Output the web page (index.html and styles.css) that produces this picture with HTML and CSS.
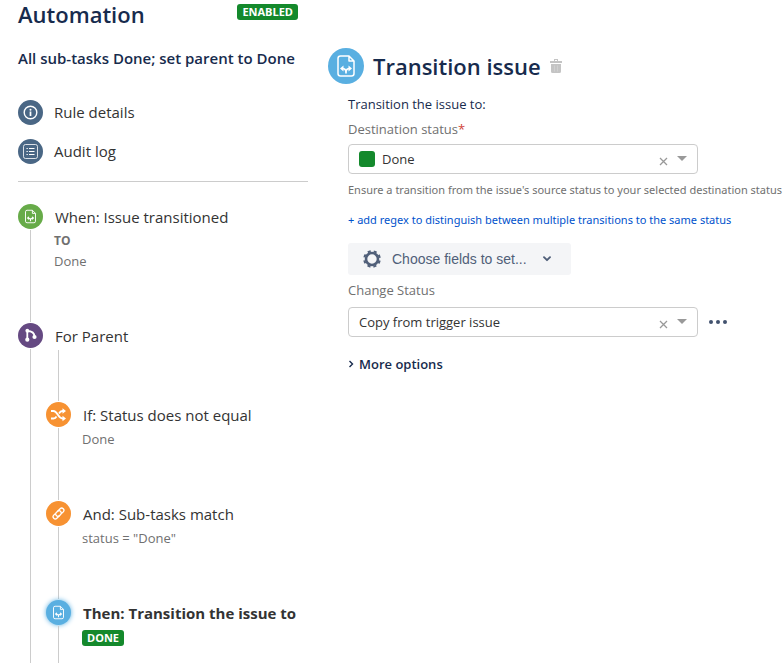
FILE: index.html
```html
<!DOCTYPE html>
<html lang="en">
<head>
<meta charset="utf-8">
<title>Automation</title>
<link rel="stylesheet" href="styles.css">
</head>
<body>
<svg class="sprite" aria-hidden="true">
  <symbol id="doc" viewBox="0 0 24 24">
    <path d="M15 2H6.500A2.500 2.500 0 0 0 4 4.500v15A2.500 2.500 0 0 0 6.500 22h11a2.500 2.500 0 0 0 2.500-2.500V7zM15 2v5h5" fill="none" stroke="currentColor" stroke-width="1.500" stroke-linejoin="round"/>
    <path d="M12 19.500V18c0-2-1.200-3.500-4-3.500M12 18c0-2 1.200-3.500 4-3.500" fill="none" stroke="currentColor" stroke-width="1.700"/>
    <path d="M9.500 11.500v6L6 14.500zM14.500 11.500v6l3.500-3z" fill="currentColor"/>
  </symbol>
  <symbol id="caret" viewBox="0 0 10 5"><path d="M0 0h10L5 5z" fill="currentColor"/></symbol>
  <symbol id="cross" viewBox="0 0 9 9"><path d="M1 1l7 7M8 1L1 8" stroke="currentColor" stroke-width="1.300" fill="none"/></symbol>
</svg>
<div class="page">
  <aside class="sidebar">
    <header class="sidebar-head">
      <h1>Automation</h1>
      <span class="badge">ENABLED</span>
    </header>
    <h2 class="rule-name">All sub-tasks Done; set parent to Done</h2>
    <nav class="links">
      <a href="#details"><span class="dot slate"><svg viewBox="0 0 25 25"><circle cx="12.500" cy="12.500" r="6.300" fill="none" stroke="currentColor" stroke-width="1.400"/><circle cx="12.500" cy="9.700" r="1" fill="currentColor"/><path d="M12.500 11.500v4.500" stroke="currentColor" stroke-width="1.700"/></svg></span>Rule details</a>
      <a href="#audit"><span class="dot slate"><svg viewBox="0 0 25 25"><rect x="5.500" y="5.500" width="14" height="14" rx="2" fill="none" stroke="currentColor" opacity=".8"/><path d="M8.500 9.500h1.300M8.500 12.500h1.300M8.500 15.500h1.300M11 9.500h5.500M11 12.500h5.500M11 15.500h5.500" stroke="currentColor"/></svg></span>Audit log</a>
    </nav>
    <ol class="steps">
      <li class="step">
        <div class="rail"><span class="dot green"><svg class="doc-icon"><use href="#doc"/></svg></span></div>
        <div class="step-body">
          <a class="step-title" href="#when">When: Issue transitioned</a>
          <p class="detail strong">TO</p>
          <p class="detail">Done</p>
        </div>
      </li>
      <li class="step branch">
        <div class="rail"><span class="dot purple"><svg viewBox="0 0 25 25"><path d="M9.300 8v9M9.300 8c5 0 7.200 2 7.200 6" fill="none" stroke="currentColor" stroke-width="1.800"/><circle cx="9.300" cy="7.700" r="1.900" fill="currentColor"/><circle cx="9.300" cy="16.700" r="2.100" fill="currentColor"/><circle cx="16.500" cy="14" r="2.100" fill="currentColor"/></svg></span></div>
        <div class="step-body">
          <a class="step-title" href="#parent">For Parent</a>
          <ol class="steps nested">
            <li class="step">
              <div class="rail"><span class="dot orange"><svg viewBox="0 0 25 25"><path d="M5 9h2.500c4 0 4.500 7.500 9 7.500h1M5 16.500h2.500c1.500 0 2.400-.8 3-2M13 11.500c.8-1.500 1.700-2.500 3.500-2.500h1" fill="none" stroke="currentColor" stroke-width="1.800"/><path d="M16.500 6.200v5.600L20 9zM16.500 13.700v5.600l3.500-2.800z" fill="currentColor"/></svg></span></div>
              <div class="step-body">
                <a class="step-title" href="#if">If: Status does not equal</a>
                <p class="detail">Done</p>
              </div>
            </li>
            <li class="step">
              <div class="rail"><span class="dot orange"><svg viewBox="0 0 25 25"><g transform="rotate(-45 12.500 12.500)" fill="none" stroke="currentColor" stroke-width="1.300" stroke-linecap="round"><path d="M11.500 14.700a2.200 2.200 0 0 1 .5-4.400h5a2.200 2.200 0 0 1 0 4.400h-1.500"/><path d="M13.500 10.300a2.200 2.200 0 0 1-.5 4.400H8a2.200 2.200 0 0 1 0-4.400h1.500"/></g></svg></span></div>
              <div class="step-body">
                <a class="step-title" href="#and">And: Sub-tasks match</a>
                <p class="detail">status = "Done"</p>
              </div>
            </li>
            <li class="step last">
              <div class="rail"><span class="dot blue glow"><svg class="doc-icon"><use href="#doc"/></svg></span></div>
              <div class="step-body">
                <a class="step-title current" href="#then">Then: Transition the issue to</a>
                <p class="detail"><span class="badge">DONE</span></p>
              </div>
            </li>
          </ol>
        </div>
      </li>
    </ol>
  </aside>

  <main class="content">
    <header class="content-head">
      <span class="dot big blue"><svg class="doc-icon"><use href="#doc"/></svg></span>
      <h2>Transition issue</h2>
      <button class="icon-button trash" type="button" aria-label="Delete"><svg viewBox="0 0 12 14"><path d="M0 2h12v2H0zM4 0h4v2H7V1H5v1H4zM1 5h10v7.500a1.500 1.500 0 0 1-1.500 1.500h-7A1.500 1.500 0 0 1 1 12.500z" fill="#c4c4c4"/><path d="M4.500 6.500v6M7.500 6.500v6" stroke="#d0d0d0"/></svg></button>
    </header>
    <form class="form">
      <p class="lead">Transition the issue to:</p>
      <label for="status">Destination status<span class="required">*</span></label>
      <div class="row">
        <div class="picker with-swatch">
          <select id="status"><option>Done</option></select>
          <span class="swatch"></span>
          <button class="icon-button clear" type="button" aria-label="Clear"><svg><use href="#cross"/></svg></button>
          <svg class="caret"><use href="#caret"/></svg>
        </div>
      </div>
      <p class="hint">Ensure a transition from the issue's source status to your selected destination status</p>
      <a class="regex" href="#regex">+ add regex to distinguish between multiple transitions to the same status</a>
      <button class="choose" type="button">
        <svg class="gear" viewBox="0 0 18 18"><circle cx="9" cy="9" r="6" fill="none" stroke="currentColor" stroke-width="2.600"/><circle cx="9" cy="9" r="7.800" fill="none" stroke="currentColor" stroke-width="2" stroke-dasharray="3.100 3.026" stroke-dashoffset="-1.500"/></svg>
        Choose fields to set...
        <svg class="chevron" viewBox="0 0 8 6"><path d="M1 1.200l3 3 3-3" fill="none" stroke="currentColor" stroke-width="1.900" stroke-linecap="round" stroke-linejoin="round"/></svg>
      </button>
      <label for="change">Change Status</label>
      <div class="row">
        <div class="picker">
          <select id="change"><option>Copy from trigger issue</option></select>
          <button class="icon-button clear" type="button" aria-label="Clear"><svg><use href="#cross"/></svg></button>
          <svg class="caret"><use href="#caret"/></svg>
        </div>
        <button class="icon-button dots" type="button" aria-label="More actions"><svg viewBox="0 0 18 4"><g fill="currentColor"><circle cx="2" cy="2" r="2"/><circle cx="9" cy="2" r="2"/><circle cx="16" cy="2" r="2"/></g></svg></button>
      </div>
      <button class="more" type="button"><svg viewBox="0 0 6 8"><path d="M1.500 1L4.500 4l-3 3" fill="none" stroke="currentColor" stroke-width="1.400"/></svg>More options</button>
    </form>
  </main>
</div>
</body>
</html>
```
FILE: styles.css
```css
* { box-sizing: border-box; }
body {
  margin: 0;
  background: #fff;
  color: #333;
  font: 14px/20px "Open Sans", "Noto Sans", sans-serif;
}
h1, h2, p, ol { margin: 0; padding: 0; }
ol { list-style: none; }
a { color: inherit; text-decoration: none; }
svg { display: block; }
button { border: 0; background: none; padding: 0; cursor: pointer; }
.sprite { position: absolute; width: 0; height: 0; }

.page { display: flex; height: 100vh; overflow: hidden; }

/* Sidebar */
.sidebar {
  flex: 0 0 308px;
  display: flex;
  flex-direction: column;
  padding-left: 18px;
}
.sidebar-head {
  display: flex;
  justify-content: space-between;
  align-items: flex-start;
  padding-right: 10px;
}
h1, .content-head h2 {
  color: #172b4d;
  font-size: 22px;
  font-weight: 600;
  line-height: 28px;
}
.badge {
  display: block;
  width: fit-content;
  padding: 0 5px;
  border-radius: 3px;
  background: #14892c;
  color: #fff;
  font-size: 11px;
  font-weight: 700;
  line-height: 16px;
}
.sidebar-head .badge { margin-top: 4px; }
.rule-name {
  margin-top: 20px;
  color: #172b4d;
  font-size: 15px;
  font-weight: 600;
  line-height: 20px;
  white-space: nowrap;
}
.links {
  display: grid;
  gap: 14px;
  margin-top: 32px;
  padding-bottom: 17px;
  border-bottom: 1px solid #ccc;
}
.links a { display: flex; gap: 11px; align-items: center; font-size: 15px; line-height: 25px; }
.dot {
  flex: none;
  display: grid;
  place-items: center;
  width: 25px;
  height: 25px;
  border-radius: 50%;
  color: #fff;
}
.dot svg { width: 25px; height: 25px; }
.dot .doc-icon { width: 15px; height: 15px; }
.dot.big .doc-icon { width: 24px; height: 24px; }
.slate { background: #4a6785; }
.green { background: #67ab49; }
.purple { background: #654982; }
.orange { background: #f79232; }
.blue { background: #59afe1; }
.glow { box-shadow: 0 0 5px #59afe1; }

.steps { display: flex; flex-direction: column; margin-top: 22px; flex: 1; }
.step { display: flex; gap: 3px; min-height: 119px; }
.rail { display: flex; flex-direction: column; align-items: center; gap: 1px; width: 25px; padding-bottom: 1px; }
.rail::after { content: ""; flex: 1; width: 1px; background: #ccc; }
.branch, .last { flex: 1; }
.branch > .rail, .last > .rail { padding-bottom: 0; }
.step-body { display: flex; flex-direction: column; flex: 1; white-space: nowrap; }
.step-title { padding-left: 9px; font-size: 15px; line-height: 27px; }
.current { font-weight: 700; }
.detail { padding-left: 8px; color: #707070; font-size: 13px; }
.strong { font-size: 12px; font-weight: 700; }
.nested { margin-top: 0; }
.nested::before { content: ""; width: 1px; height: 51px; margin: 0 0 1px 12px; background: #ccc; }
.nested .step { min-height: 99px; }
.nested .last { min-height: 63px; }
.detail .badge { margin-top: 3px; }

/* Content */
.content { flex: 1; min-width: 0; padding: 48px 0 0 20px; overflow: hidden; }
.content-head { display: flex; align-items: center; gap: 9px; }
.dot.big { width: 36px; height: 36px; }
.icon-button { color: #999; }
.trash svg { width: 12px; height: 14px; }
.form { padding: 10px 0 0 20px; }
.lead { color: #172b4d; font-size: 13px; }
label { display: block; margin-top: 5px; color: #707070; font-size: 13px; }
.required { color: #d04437; }
.picker { position: relative; width: 350px; }
select {
  appearance: none;
  display: block;
  width: 100%;
  height: 30px;
  padding: 0 50px 0 10px;
  border: 1px solid #ccc;
  border-radius: 4px;
  background: #fff;
  color: #333;
  font: inherit;
  font-size: 13px;
}
.with-swatch select { padding-left: 33px; }
.swatch { position: absolute; left: 11px; top: 7px; width: 16px; height: 16px; border-radius: 3px; background: #14892c; }
.clear { position: absolute; right: 30px; top: 13px; }
.clear svg { width: 9px; height: 9px; }
.caret { position: absolute; right: 11px; top: 12px; width: 10px; height: 5px; color: #999; }
.hint, .regex { font-family: "Noto Sans", "Open Sans", sans-serif; font-size: 11px; white-space: nowrap; }
.hint { margin-top: 6px; color: #707070; }
.regex { display: block; margin-top: 10px; color: #0052cc; }
.choose {
  display: flex;
  align-items: center;
  height: 32px;
  margin-top: 13px;
  padding: 0 20px 0 15px;
  border-radius: 3px;
  background: #f4f5f7;
  color: #505f79;
  font: 14px "Liberation Sans", sans-serif;
}
.gear { width: 18px; height: 18px; margin-right: 11px; }
.chevron { width: 8px; height: 6px; margin-left: 16px; }
.row { display: flex; align-items: center; gap: 11px; margin-top: 5px; }
.choose ~ .row { margin-top: 7px; }
.dots { color: #42526e; }
.dots svg { width: 18px; height: 4px; }
.more {
  display: flex;
  align-items: center;
  gap: 5px;
  margin-top: 17px;
  color: #172b4d;
  font: 600 13px/20px "Open Sans", "Noto Sans", sans-serif;
}
.more svg { width: 6px; height: 8px; }
```
